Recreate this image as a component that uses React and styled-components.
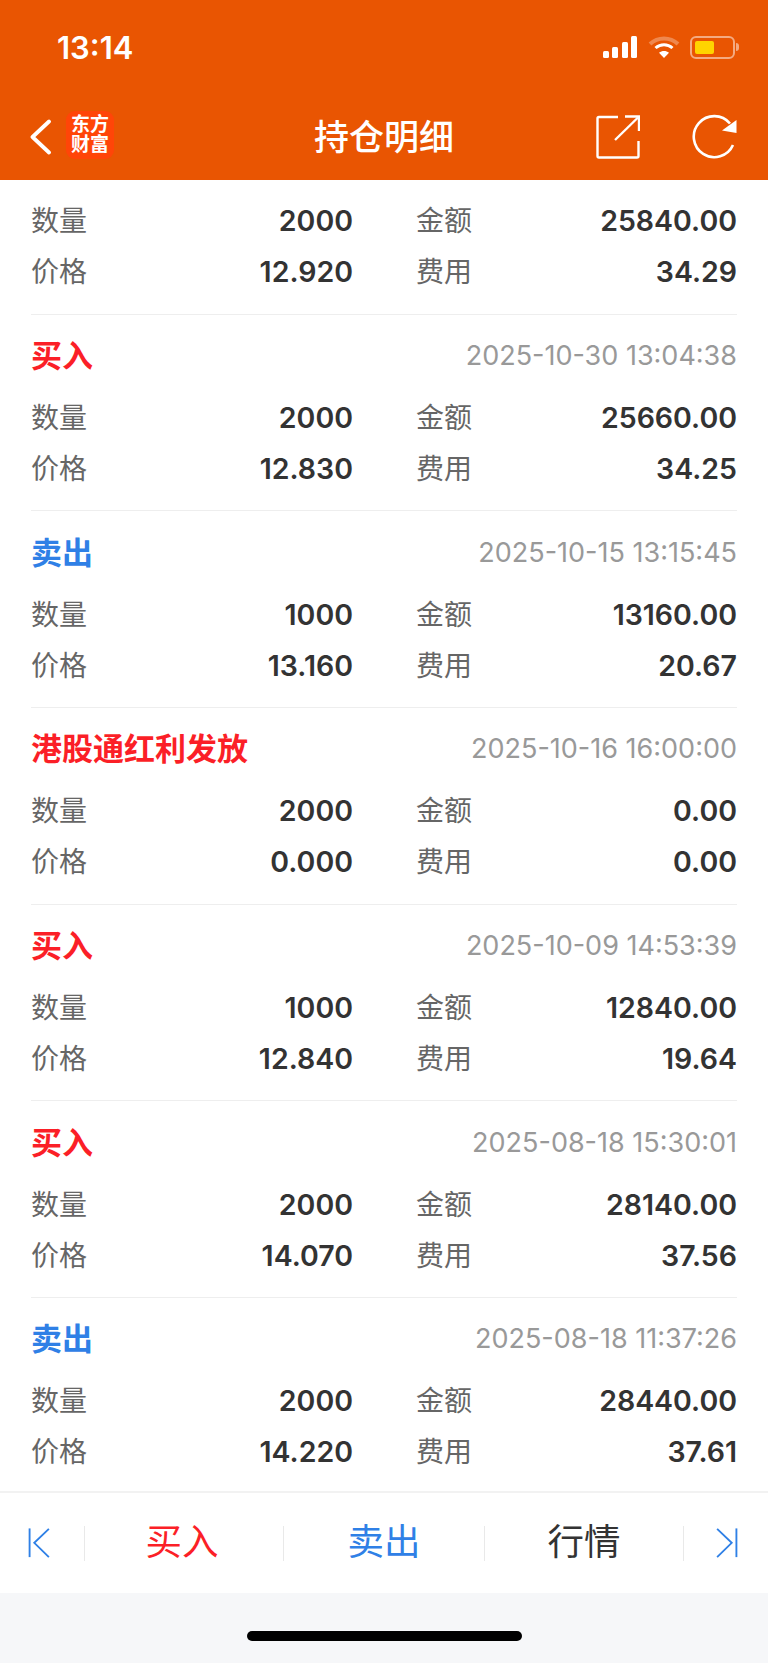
import React from "react";
import styled, { createGlobalStyle } from "styled-components";

const records = [
    { qty: "2000", amount: "25840.00", price: "12.920", fee: "34.29" },
    { type: "买入", color: "red", time: "2025-10-30 13:04:38", qty: "2000", amount: "25660.00", price: "12.830", fee: "34.25" },
    { type: "卖出", color: "blue", time: "2025-10-15 13:15:45", qty: "1000", amount: "13160.00", price: "13.160", fee: "20.67" },
    { type: "港股通红利发放", color: "red", time: "2025-10-16 16:00:00", qty: "2000", amount: "0.00", price: "0.000", fee: "0.00" },
    { type: "买入", color: "red", time: "2025-10-09 14:53:39", qty: "1000", amount: "12840.00", price: "12.840", fee: "19.64" },
    { type: "买入", color: "red", time: "2025-08-18 15:30:01", qty: "2000", amount: "28140.00", price: "14.070", fee: "37.56" },
    { type: "卖出", color: "blue", time: "2025-08-18 11:37:26", qty: "2000", amount: "28440.00", price: "14.220", fee: "37.61" },
];

const colors = { red: "#fb1f27", blue: "#2f80e6", dark: "#333333" };

function Signal() {
    return (
        <svg width="36" height="22" viewBox="0 0 36 22" fill="#fff">
            <rect x="1" y="15" width="6" height="7" rx="1.5" />
            <rect x="10" y="11" width="6" height="11" rx="1.5" />
            <rect x="20" y="6" width="6" height="16" rx="1.5" />
            <rect x="29" y="0" width="6" height="22" rx="1.5" />
        </svg>
    );
}

function Wifi() {
    return (
        <svg width="32" height="24" viewBox="0 0 32 24" fill="none" stroke="#fff">
            <path d="M2 9 C10 1.500 22 1.500 30 9" strokeWidth="4" opacity="0.3" />
            <path d="M7.500 13 C12.500 8.500 19.500 8.500 24.500 13" strokeWidth="3" />
            <path d="M16 23 L11 17.800 C14 15.400 18 15.400 21 17.800 Z" fill="#fff" stroke="none" />
        </svg>
    );
}

function Share() {
    return (
        <svg width="44" height="44" viewBox="0 0 44 44" fill="none" stroke="#fff" strokeWidth="2.400">
            <path d="M22 2 H3 Q1.500 2 1.500 3.500 V41 Q1.500 42.500 3 42.500 H41 Q42.500 42.500 42.500 41 V26" />
            <path d="M19 25 L42 2.500" />
            <path d="M29 1.500 H43 V16" />
        </svg>
    );
}

function Refresh() {
    return (
        <svg width="46" height="46" viewBox="0 0 46 46" fill="none">
            <path d="M41 31 A20.500 20.500 0 1 1 38 9.500" stroke="#fff" strokeWidth="2.600" />
            <path d="M44.500 6 V19 L30 16.500 Z" fill="#fff" />
        </svg>
    );
}

function Skip({ end }) {
    return (
        <SkipIcon $end={end} width="24" height="32" viewBox="0 0 24 34" fill="none" stroke={colors.blue} strokeWidth="2">
            <path d="M2 1.500 V32" />
            <path d="M22.500 2 L7 16.800 L22.500 32" />
        </SkipIcon>
    );
}

function Field({ label, value }) {
    return (
        <FieldBox>
            <Label>{label}</Label>
            <Value>{value}</Value>
        </FieldBox>
    );
}

export default function App() {
    return (
        <Page>
            <GlobalStyle />
            <Header>
                <StatusBar>
                    <Clock>13:14</Clock>
                    <StatusIcons>
                        <Signal />
                        <Wifi />
                        <Battery>
                            <BatteryLevel />
                        </Battery>
                    </StatusIcons>
                </StatusBar>
                <NavBar>
                    <NavLeft>
                        <svg width="24" height="36" viewBox="0 0 24 36" fill="none" stroke="#fff" strokeWidth="3.800" strokeLinecap="round" strokeLinejoin="round">
                            <path d="M19 2.500 L2.500 18 L19 33.500" />
                        </svg>
                        <Logo>
                            <LogoLine>东方</LogoLine>
                            <LogoLine>财富</LogoLine>
                        </Logo>
                    </NavLeft>
                    <Title>持仓明细</Title>
                    <NavRight>
                        <Share />
                        <Refresh />
                    </NavRight>
                </NavBar>
            </Header>
            <List>
                {records.map((r, i) => (
                    <Card key={i} $first={!r.type}>
                        {r.type && (
                            <CardHead>
                                <TypeName $color={colors[r.color]}>{r.type}</TypeName>
                                <Time>{r.time}</Time>
                            </CardHead>
                        )}
                        <FieldGrid>
                            <Field label="数量" value={r.qty} />
                            <Field label="金额" value={r.amount} />
                            <Field label="价格" value={r.price} />
                            <Field label="费用" value={r.fee} />
                        </FieldGrid>
                    </Card>
                ))}
            </List>
            <Toolbar>
                <ToolCell><Skip /></ToolCell>
                <ToolCell><ToolLabel $color={colors.red} $shift={4}>买入</ToolLabel></ToolCell>
                <ToolCell><ToolLabel $color={colors.blue}>卖出</ToolLabel></ToolCell>
                <ToolCell><ToolLabel $color={colors.dark}>行情</ToolLabel></ToolCell>
                <ToolCell><Skip end /></ToolCell>
            </Toolbar>
            <HomeArea>
                <HomeBar />
            </HomeArea>
        </Page>
    );
}

const GlobalStyle = createGlobalStyle`
body {
    margin: 0;
    background: #f6f7f9;
    font-family: "Inter", "Noto Sans CJK SC", sans-serif;
}
`

const Page = styled.div`
display: flex;
flex-direction: column;
width: 768px;
height: 1663px;
overflow: hidden;
background: #f6f7f9;
`

const Header = styled.header`
height: 180px;
flex-shrink: 0;
background: #e95502;
color: #fff;
`

const StatusBar = styled.div`
display: flex;
align-items: center;
justify-content: space-between;
height: 94px;
padding: 0 32px 0 57px;
`

const Clock = styled.span`
font-size: 31px;
font-weight: 600;
`

const StatusIcons = styled.div`
display: flex;
align-items: center;
gap: 10px;
margin-right: 1px;
`

const Battery = styled.div`
position: relative;
box-sizing: border-box;
width: 45px;
height: 23px;
padding: 3px;
border: 2px solid rgba(255, 255, 255, 0.5);
border-radius: 6px;

&::after {
    content: "";
    position: absolute;
    right: -6px;
    top: 5px;
    width: 3px;
    height: 8px;
    background: rgba(255, 255, 255, 0.5);
    border-radius: 0 3px 3px 0;
}
`

const BatteryLevel = styled.div`
width: 19px;
height: 100%;
background: #ffd400;
border-radius: 2px;
`

const NavBar = styled.div`
display: grid;
grid-template-columns: 1fr auto 1fr;
align-items: center;
height: 86px;
padding: 0 30px 0 30px;
`

const NavLeft = styled.div`
display: flex;
align-items: center;
gap: 12px;
`

const Logo = styled.div`
display: flex;
flex-direction: column;
align-items: center;
justify-content: center;
width: 48px;
height: 48px;
margin-bottom: 4px;
background: #ff4508;
border-radius: 9px;
color: #fff;
font-family: "Liberation Serif", "Noto Sans CJK SC", serif;
font-size: 19px;
font-weight: 700;
`

const LogoLine = styled.span`
display: block;
height: 20px;
line-height: 20px;
`

const Title = styled.h1`
margin: 0 0 6px;
font-family: "Noto Sans CJK SC", sans-serif;
font-size: 35px;
font-weight: 500;
line-height: 1;
`

const NavRight = styled.div`
display: flex;
align-items: center;
justify-content: flex-end;
gap: 52px;
`

const List = styled.main`
flex: none;
height: 1311px;
overflow: hidden;
background: #fff;
`

const Card = styled.section`
box-sizing: border-box;
height: ${props => props.$first ? "134.500px" : "196.700px"};
margin: 0 31px;
padding-top: ${props => props.$first ? "15.500px" : "0"};
border-bottom: 1px solid #eeeeee;
`

const CardHead = styled.div`
display: flex;
align-items: center;
justify-content: space-between;
box-sizing: border-box;
height: 78px;
`

const TypeName = styled.span`
font-family: "Noto Sans CJK SC", sans-serif;
font-size: 31px;
font-weight: 700;
color: ${props => props.$color};
`

const Time = styled.span`
margin-top: 4px;
font-size: 27px;
color: #999999;
`

const FieldGrid = styled.div`
display: grid;
grid-template-columns: 322px 321px;
column-gap: 63px;
`

const FieldBox = styled.div`
display: flex;
align-items: center;
justify-content: space-between;
height: 51px;
`

const Label = styled.span`
font-family: "Noto Sans CJK SC", sans-serif;
font-size: 28px;
color: #666666;
position: relative;
top: -2px;
`

const Value = styled.span`
margin-bottom: 1px;
font-size: 28.500px;
font-weight: 600;
color: #333333;
`

const Toolbar = styled.nav`
display: grid;
grid-template-columns: 85px 199px 201px 199px 84px;
align-items: center;
box-sizing: border-box;
height: 102px;
flex-shrink: 0;
background: #fff;
border-top: 2px solid #f2f2f2;
`

const ToolCell = styled.div`
display: flex;
align-items: center;
justify-content: center;
height: 35px;
border-right: 1px solid #e9e9e9;

&:last-child {
    border-right: none;
}
`

const ToolLabel = styled.span`
margin: 0 ${props => props.$shift || 0}px 6px 0;
font-family: "Noto Sans CJK SC", sans-serif;
font-size: 36.500px;
line-height: 1;
color: ${props => props.$color};
`

const SkipIcon = styled.svg`
margin: 0 ${props => props.$end ? "0" : "6px"} 0 ${props => props.$end ? "2px" : "0"};
transform: ${props => props.$end ? "scaleX(-1)" : "none"};
`

const HomeArea = styled.div`
display: flex;
justify-content: center;
flex: 1;
padding-top: 38px;
`

const HomeBar = styled.div`
width: 275px;
height: 10px;
background: #000;
border-radius: 5px;
`
